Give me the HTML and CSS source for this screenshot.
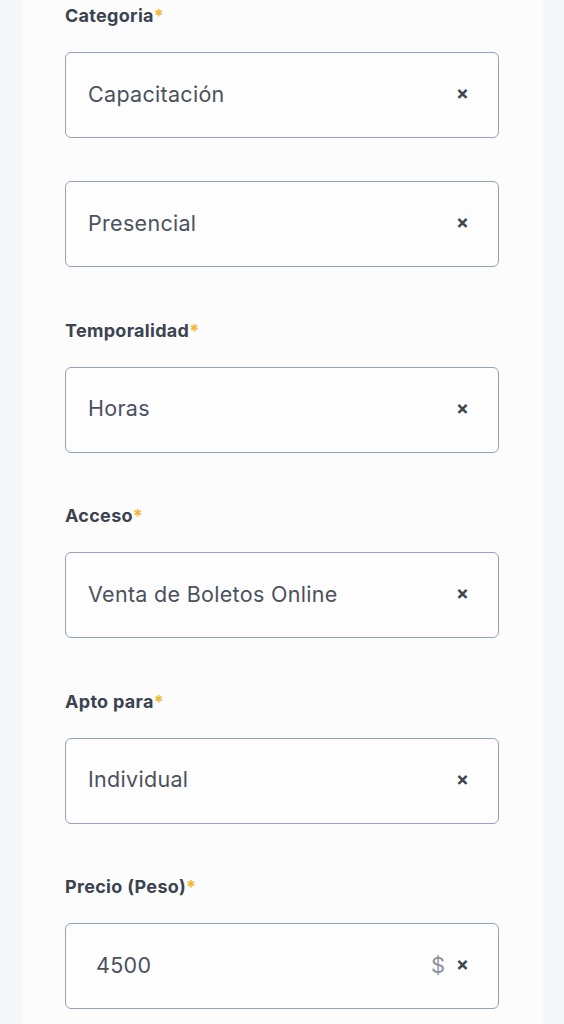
FILE: index.html
```html
<!DOCTYPE html>
<html lang="es">
<head>
<meta charset="utf-8">
<link rel="stylesheet" href="styles.css">
</head>
<body>
<div class="panel">
  <div class="field first">
    <div class="label">Categoria<span class="req">*</span></div>
    <div class="box"><span class="value">Capacitación</span><span class="clear">×</span></div>
    <div class="box second"><span class="value">Presencial</span><span class="clear">×</span></div>
  </div>
  <div class="field">
    <div class="label">Temporalidad<span class="req">*</span></div>
    <div class="box"><span class="value">Horas</span><span class="clear">×</span></div>
  </div>
  <div class="field">
    <div class="label">Acceso<span class="req">*</span></div>
    <div class="box"><span class="value">Venta de Boletos Online</span><span class="clear">×</span></div>
  </div>
  <div class="field">
    <div class="label">Apto para<span class="req">*</span></div>
    <div class="box"><span class="value">Individual</span><span class="clear">×</span></div>
  </div>
  <div class="field">
    <div class="label">Precio (Peso)<span class="req">*</span></div>
    <div class="box price"><span class="value">4500</span><span class="currency">$</span><span class="clear">×</span></div>
  </div>
</div>
</body>
</html>
```
FILE: styles.css
```css
html, body {
  margin: 0;
  padding: 0;
  background: #f5f7fa;
}
body {
  font-family: "Inter", "Open Sans", sans-serif;
}
.panel {
  margin: 0 21px 0 22px;
  background: #fcfcfc;
  padding: 5px 44px 20px 43px;
  min-height: 1024px;
  box-sizing: border-box;
}
.field {
  margin-top: 52.5px;
}
.field.first {
  margin-top: 0;
}
.label {
  font-size: 18px;
  line-height: 22px;
  font-weight: 700;
  color: #3b4350;
  letter-spacing: 0.3px;
  margin-bottom: 25px;
}
.req {
  color: #f2b632;
}
.box {
  height: 86px;
  box-sizing: border-box;
  border: 1.5px solid #95a3b7;
  border-radius: 6px;
  background: #fdfdfd;
  display: flex;
  align-items: center;
  padding: 0 29px 3px 22px;
}
.box.second {
  margin-top: 43px;
}
.value {
  flex: 1;
  font-size: 21.5px;
  color: #4b525d;
  font-weight: 400;
  letter-spacing: 0.3px;
}
.price .value {
  padding-left: 8px;
}
.currency {
  font-size: 22px;
  color: #8a9099;
  margin-right: 11px;
}
.clear {
  font-size: 19px;
  font-weight: 700;
  color: #3f4650;
  line-height: 1;
}
```
